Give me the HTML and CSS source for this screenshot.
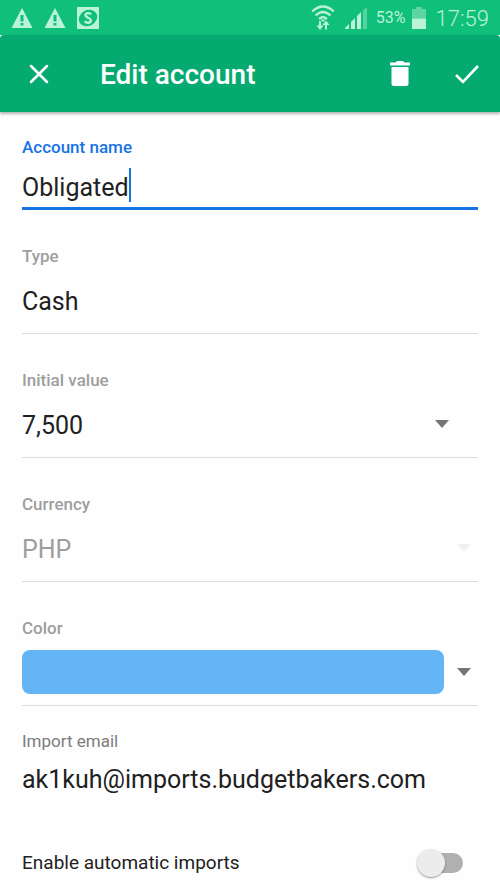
FILE: index.html
```html
<!DOCTYPE html>
<html lang="en">
<head>
<meta charset="utf-8">
<meta name="viewport" content="width=device-width, initial-scale=1">
<title>Edit account</title>
<link rel="stylesheet" href="styles.css">
</head>
<body>
<div class="status">
  <div class="status-group notices">
    <svg class="warn" viewBox="0 0 22 20" aria-hidden="true"><path fill="currentColor" fill-rule="evenodd" d="M11 0 21.500 20H.5ZM9.500 7v6.500h3V7ZM9.500 15v2.500h3V15Z"/></svg>
    <svg class="warn" viewBox="0 0 22 20" aria-hidden="true"><path fill="currentColor" fill-rule="evenodd" d="M11 0 21.500 20H.5ZM9.500 7v6.500h3V7ZM9.500 15v2.500h3V15Z"/></svg>
    <svg class="badge" viewBox="0 0 22 22" aria-hidden="true"><path fill="currentColor" d="M0 0h22v22H0z"/><ellipse class="badge-disc" cx="11" cy="11" rx="9.500" ry="7.800" transform="rotate(-28 11 11)"/><path d="M14 7.500C13 5.500 8.500 5.500 8.500 8.300 8.500 11 13.800 10.500 13.800 13.500 13.800 16.500 8.800 16.500 8 14" fill="none" stroke="currentColor" stroke-width="2.400"/></svg>
  </div>
  <div class="status-group">
    <svg class="wifi" viewBox="0 0 24 26" aria-hidden="true"><g fill="none" stroke="currentColor" stroke-width="2.300"><path d="M1.200 6.500Q12-3.500 22.800 6.500M4.600 10.500Q12 3.500 19.400 10.500M8 14Q12 10.200 16 14"/><path stroke-width="2" d="M9 16v6M15 24.500v-6"/></g><path fill="currentColor" d="m12 17-2.500-2.500h5ZM5.500 20.500h7L9 25ZM11.500 20h7L15 15.500Z"/></svg>
    <svg class="signal" viewBox="0 0 22 22" aria-hidden="true"><path fill="currentColor" d="M0 22v-1l4-4v5ZM6 22v-7l4-4v11ZM12 22V9l4-4v17Z"/><path fill="currentColor" opacity=".4" d="M18 22V3l4-3v22Z"/></svg>
    <span class="percent">53%</span>
    <svg class="battery" viewBox="0 0 14 22" aria-hidden="true"><path fill="currentColor" opacity=".45" d="M4 0h6v2h4v9.500H0V2h4z"/><path fill="currentColor" d="M0 11.500h14V22H0z"/></svg>
    <time class="clock">17:59</time>
  </div>
</div>

<header class="appbar">
  <button class="icon-button" type="button" aria-label="Close"><svg viewBox="0 0 28 28"><path d="m6 6 16 16M22 6 6 22" fill="none" stroke="currentColor" stroke-width="2.500" stroke-linecap="round"/></svg></button>
  <h1 class="title">Edit account</h1>
  <button class="icon-button" type="button" aria-label="Delete"><svg viewBox="0 0 28 28"><path fill="currentColor" d="M4 2.500h5.500l1.500-1.500h6l1.500 1.500H24v3H4ZM5.500 7h17v16.500a2.500 2.500 0 0 1-2.500 2.500H8a2.500 2.500 0 0 1-2.500-2.500Z"/></svg></button>
  <button class="icon-button" type="submit" form="account" aria-label="Save"><svg viewBox="0 0 28 28"><path d="m3 15 7 7L25 6" fill="none" stroke="currentColor" stroke-width="2.600"/></svg></button>
</header>

<form class="form" id="account">
  <div class="field active">
    <label for="name">Account name</label>
    <div class="row"><input class="value name" id="name" type="text" value="Obligated" autocomplete="off" spellcheck="false"><span class="caret"></span></div>
  </div>
  <div class="field">
    <label for="type">Type</label>
    <div class="row"><select class="value" id="type"><option>Cash</option></select></div>
  </div>
  <div class="field">
    <label for="initial">Initial value</label>
    <div class="row calc"><input class="value" id="initial" type="text" inputmode="decimal" value="7,500"><button class="drop" type="button" aria-label="Open calculator"><svg class="arrow" viewBox="0 0 14 8"><path fill="currentColor" d="M0 0h14L7 8z"/></svg></button></div>
  </div>
  <div class="field disabled">
    <label for="currency">Currency</label>
    <div class="row"><select class="value" id="currency" disabled><option>PHP</option></select><span class="drop"><svg class="arrow" viewBox="0 0 14 8" aria-hidden="true"><path fill="currentColor" d="M0 0h14L7 8z"/></svg></span></div>
  </div>
  <div class="field">
    <label for="color">Color</label>
    <div class="row"><button class="color" id="color" type="button"><span class="swatch"></span><span class="drop"><svg class="arrow" viewBox="0 0 14 8" aria-hidden="true"><path fill="currentColor" d="M0 0h14L7 8z"/></svg></span></button></div>
  </div>
  <div class="import">
    <label for="email">Import email</label>
    <output class="email" id="email">ak1kuh@imports.budgetbakers.com</output>
  </div>
  <div class="toggle">
    <label for="auto">Enable automatic imports</label>
    <input class="switch" id="auto" type="checkbox" role="switch">
  </div>
</form>
</body>
</html>
```
FILE: styles.css
```css
* {
  box-sizing: border-box;
}

body {
  margin: 0;
  background: #fefefe;
  color: #212121;
  font-family: Roboto, "Liberation Sans", sans-serif;
}

button,
input,
select {
  margin: 0;
  padding: 0;
  border: 0;
  background: none;
  color: inherit;
  font: inherit;
  appearance: none;
  outline: 0;
}

svg {
  display: block;
}

/* System status bar */
.status {
  display: flex;
  justify-content: space-between;
  align-items: center;
  height: 35px;
  padding: 0 11px;
  background: #0fbf7a;
  color: #baf3d8;
}

.status-group {
  display: flex;
  align-items: center;
  gap: 6px;
}

.notices {
  gap: 11px;
}

.warn {
  width: 22px;
  height: 20px;
}

.badge {
  width: 22px;
  height: 22px;
}

.badge-disc {
  fill: #0fbf7a;
}

.wifi {
  width: 24px;
  height: 26px;
  margin-right: 4px;
}

.signal {
  width: 22px;
  height: 22px;
}

.percent {
  margin-left: 3px;
  font-size: 16px;
}

.battery {
  width: 14px;
  height: 22px;
}

.clock {
  margin-left: 4px;
  padding-top: 2px;
  font-size: 22px;
  font-weight: 300;
}

/* App bar */
.appbar {
  position: relative;
  display: flex;
  align-items: center;
  height: 77px;
  padding: 0 8px 0 14px;
  border-radius: 4px 4px 0 0;
  background: #04aa70;
  box-shadow: 0 2px 3px rgb(0 0 0 / 30%);
  color: #fff;
}

.icon-button {
  display: grid;
  place-items: center;
  width: 50px;
  height: 50px;
}

.icon-button svg {
  width: 28px;
  height: 28px;
}

.icon-button + .icon-button {
  margin-left: 17px;
}

.title {
  flex: 1;
  margin: 0 0 0 36px;
  padding-top: 2px;
  font-size: 28px;
  font-weight: 500;
  line-height: 32px;
}

/* Form */
.form {
  padding: 25px 22px 0;
}

.field {
  margin-bottom: 36px;
  border-bottom: 1px solid #dcdcdc;
}

.field label {
  display: block;
  color: #9e9e9e;
  font-size: 17px;
  font-weight: 500;
  line-height: 20px;
}

.row {
  display: flex;
  align-items: center;
  height: 67px;
}

.value {
  flex: 1;
  min-width: 0;
  height: 38px;
  padding-top: 4px;
  font-size: 25px;
  line-height: 34px;
}

.active {
  border-bottom: 3px solid #1673e6;
}

.active label {
  color: #1673e6;
}

.active .row {
  height: 50px;
  padding-top: 6px;
}

.name {
  flex: none;
  field-sizing: content;
  caret-color: transparent;
}

.caret {
  width: 2px;
  height: 34px;
  background: #1673e6;
}

.drop {
  display: grid;
  place-items: center;
  width: 28px;
  height: 44px;
  color: #757575;
}

.arrow {
  width: 14px;
  height: 8px;
}

.calc {
  padding-right: 22px;
}

.disabled .value {
  color: #9e9e9e;
  opacity: 1;
}

.disabled .drop {
  color: #f1f1f1;
}

.color {
  display: flex;
  flex: 1;
  align-items: center;
  gap: 6px;
}

.swatch {
  flex: 1;
  height: 44px;
  border-radius: 8px;
  background: #64b5f6;
}

.import {
  margin-top: -11px;
}

.import label {
  display: block;
  color: #7c7c7c;
  font-size: 17px;
  line-height: 20px;
}

.email {
  display: block;
  margin-top: 12px;
  font-size: 25px;
  line-height: 34px;
}

.toggle {
  display: flex;
  align-items: center;
  justify-content: space-between;
  margin-top: 48px;
  padding-right: 15px;
  font-size: 19px;
  line-height: 36px;
}

.switch {
  position: relative;
  width: 42px;
  height: 20px;
  border-radius: 10px;
  background: #b0b0b0;
}

.switch::before {
  content: "";
  position: absolute;
  top: -4px;
  left: -4px;
  width: 28px;
  height: 28px;
  border-radius: 50%;
  background: #ececec;
  box-shadow: 0 1px 2px rgb(0 0 0 / 40%);
}

.switch:checked {
  background: #82d5b8;
}

.switch:checked::before {
  left: 18px;
  background: #04aa70;
}
```
